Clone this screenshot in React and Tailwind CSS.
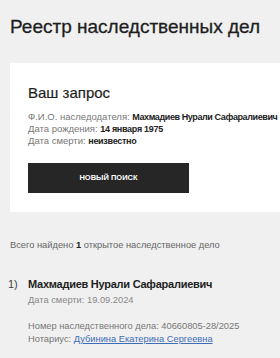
import React from "react";

export default function App() {
  return (
    <div className="min-h-[358px] w-[280px] overflow-hidden bg-[#f0f0f0] text-[#222] font-['Liberation_Sans',Arial,sans-serif]">
      <h1 className="pl-[10px] pt-[16px] text-[19px] leading-[22px] text-[#1e1e1e] whitespace-nowrap [-webkit-text-stroke:0.3px_#1e1e1e]">
        Реестр наследственных дел
      </h1>

      <div className="ml-[10px] mt-[25px] w-[300px] bg-white pl-[18px] pt-[20px] pb-[19px]">
        <h2 className="text-[15px] leading-[20px] text-[#1e1e1e] [-webkit-text-stroke:0.2px_#1e1e1e]">Ваш запрос</h2>
        <div className="mt-[8px] text-[9.5px] leading-[12px] text-[#777] whitespace-nowrap">
          <p>
            Ф.И.О. наследодателя:{" "}
            <b className="text-[9px] text-[#222] tracking-[-0.4px]">Махмадиев Нурали Сафаралиевич</b>
          </p>
          <p>
            Дата рождения: <b className="text-[9px] text-[#222] tracking-[-0.3px]">14 января 1975</b>
          </p>
          <p>
            Дата смерти: <b className="text-[9px] text-[#222] tracking-[-0.3px]">неизвестно</b>
          </p>
        </div>
        <button className="mt-[16px] flex h-[30px] w-[161px] items-center justify-center bg-[#262626] text-[7.5px] font-bold uppercase text-white">
          новый поиск
        </button>
      </div>

      <p className="pl-[10px] pt-[27px] text-[9.3px] leading-[12px] text-[#666] whitespace-nowrap">
        Всего найдено <b className="text-[#222]">1</b> открытое наследственное дело
      </p>

      <div className="mt-[25px] flex pl-[8px]">
        <span className="w-[20px] text-[11px] leading-[16px] text-[#444]">1)</span>
        <div>
          <p className="text-[11px] leading-[16px] font-bold text-[#1e1e1e] tracking-[-0.25px] whitespace-nowrap">
            Махмадиев Нурали Сафаралиевич
          </p>
          <p className="mt-[2px] text-[9.3px] leading-[12px] text-[#888]">Дата смерти: 19.09.2024</p>
          <p className="mt-[14px] text-[9.3px] leading-[13px] text-[#777]">
            Номер наследственного дела: 40660805-28/2025
          </p>
          <p className="text-[9.3px] leading-[13px] text-[#777]">
            Нотариус:{" "}
            <a className="text-[#3d6db5] underline">Дубинина Екатерина Сергеевна</a>
          </p>
        </div>
      </div>
    </div>
  );
}
